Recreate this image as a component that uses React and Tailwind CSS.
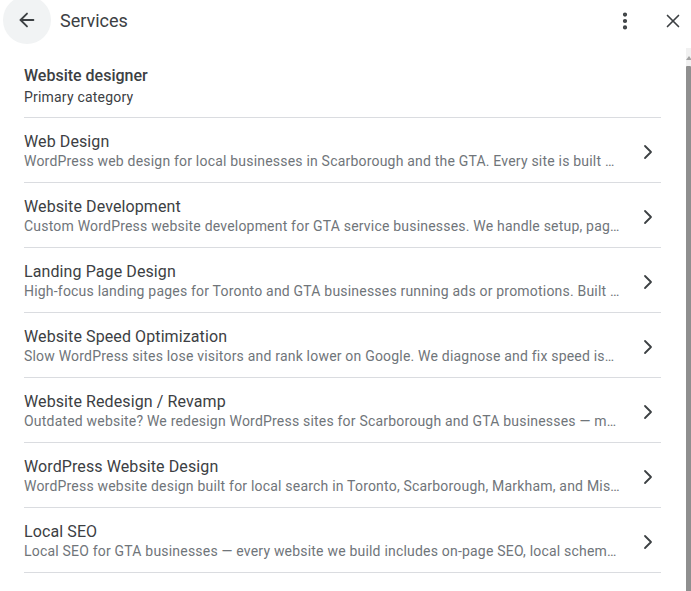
import { ArrowLeft, EllipsisVertical, X, ChevronRight } from "lucide-react";

const services = [
  {
    title: "Web Design",
    desc: "WordPress web design for local businesses in Scarborough and the GTA. Every site is built mobile-first and optimized for speed.",
  },
  {
    title: "Website Development",
    desc: "Custom WordPress website development for GTA service businesses. We handle setup, pages, plugins and hosting.",
  },
  {
    title: "Landing Page Design",
    desc: "High-focus landing pages for Toronto and GTA businesses running ads or promotions. Built to convert visitors.",
  },
  {
    title: "Website Speed Optimization",
    desc: "Slow WordPress sites lose visitors and rank lower on Google. We diagnose and fix speed issues fast.",
  },
  {
    title: "Website Redesign / Revamp",
    desc: "Outdated website? We redesign WordPress sites for Scarborough and GTA businesses — modern, fast and secure.",
  },
  {
    title: "WordPress Website Design",
    desc: "WordPress website design built for local search in Toronto, Scarborough, Markham, and Mississauga.",
  },
  {
    title: "Local SEO",
    desc: "Local SEO for GTA businesses — every website we build includes on-page SEO, local schema and more.",
  },
];

export default function App() {
  return (
    <div
      className="w-[691px] h-[591px] bg-white overflow-hidden flex flex-col"
      style={{ fontFamily: "Roboto, Arial, sans-serif" }}
    >
      {/* header */}
      <div className="h-[42px] flex items-center pl-[3px] pr-[7px] shrink-0">
        <button className="w-12 h-12 rounded-full bg-[#f1f3f4] flex items-center justify-center -mt-[3px]">
          <ArrowLeft size={22} strokeWidth={2} className="text-[#3c4043]" />
        </button>
        <div className="ml-[9px] text-[18px] text-[#3c4043] -mt-[1px]">Services</div>
        <div className="flex-1" />
        <EllipsisVertical size={22} strokeWidth={2.6} className="text-[#3c4043]" />
        <X size={22} strokeWidth={1.8} className="text-[#3c4043] ml-[26px]" />
      </div>

      <div className="flex flex-1 min-h-0">
        <div className="flex-1 min-w-0 pl-6 pr-[25px] pt-[22px]">
          <div className="pb-[10px] border-b border-[#dadce0]">
            <div className="text-[16px] leading-6 font-medium text-[#3c4043]">Website designer</div>
            <div className="text-[14px] leading-5 tracking-[0.2px] text-[#3c4043] -mt-[1px]">Primary category</div>
          </div>
          {services.map((s) => (
            <div key={s.title} className="flex items-center border-b border-[#dadce0] pt-[14px] pb-[11px]">
              <div className="flex-1 min-w-0 pr-[15px]">
                <div className="text-[16px] leading-5 tracking-[0.1px] text-[#3c4043] truncate">{s.title}</div>
                <div className="text-[14px] leading-[19px] tracking-[0.2px] text-[#70757a] truncate">{s.desc}</div>
              </div>
              <ChevronRight size={24} strokeWidth={1.8} className="text-[#3c4043] shrink-0 mr-[1px]" />
            </div>
          ))}
        </div>
        {/* scrollbar */}
        <div className="w-[5px] mt-[6px] bg-[#f1f1f1] flex flex-col items-center shrink-0">
          <div className="w-0 h-0 mt-[8px] border-l-[3px] border-r-[3px] border-b-[4px] border-l-transparent border-r-transparent border-b-[#a3a3a3]" />
          <div className="w-[5px] flex-1 mt-[6px] bg-[#8f8f8f] rounded-t-[1px]" />
        </div>
      </div>
    </div>
  );
}
